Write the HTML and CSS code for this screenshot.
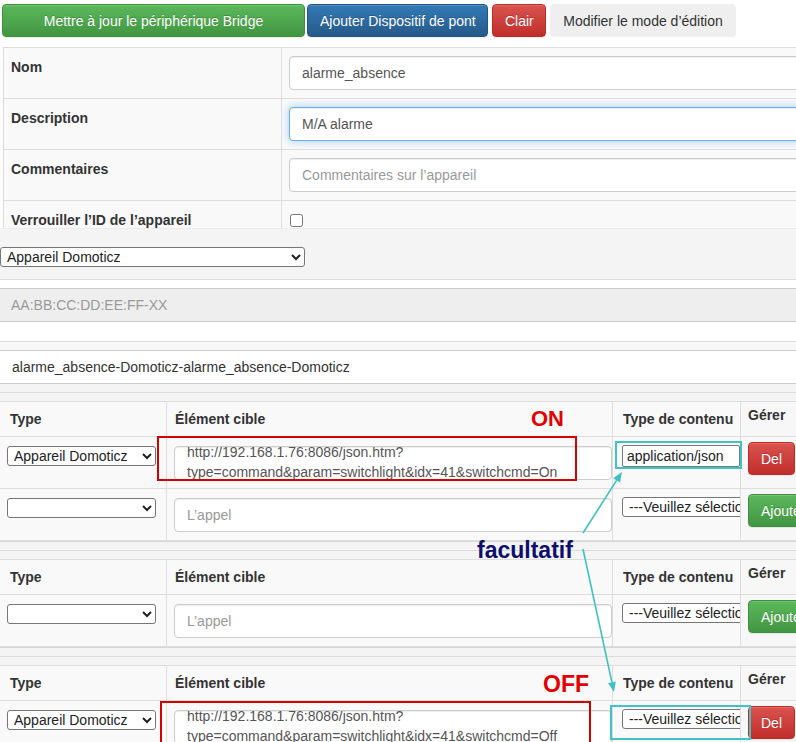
FILE: index.html
```html
<!DOCTYPE html>
<html lang="fr">
<head>
<meta charset="utf-8">
<title>Périphérique Bridge</title>
<link rel="stylesheet" href="styles.css">
</head>
<body>
  <div class="toolbar">
    <button class="btn btn-success btn-bridge">Mettre à jour le périphérique Bridge</button>
    <button class="btn btn-primary btn-add">Ajouter Dispositif de pont</button>
    <button class="btn btn-danger btn-clear">Clair</button>
    <button class="btn btn-default btn-edit">Modifier le mode d’édition</button>
  </div>

  <div class="form-wrap">
    <div class="form-label">Nom</div>
    <div class="form-field"><input class="form-control" value="alarme_absence"></div>
    <div class="form-label">Description</div>
    <div class="form-field"><input class="form-control is-focus" value="M/A alarme"></div>
    <div class="form-label">Commentaires</div>
    <div class="form-field"><input class="form-control" placeholder="Commentaires sur l’appareil"></div>
    <div class="form-label">Verrouiller l’ID de l’appareil</div>
    <div class="form-field field-top"><input type="checkbox" class="check"></div>
  </div>

  <div class="select-band">
    <select class="native-select wide-select"><option>Appareil Domoticz</option></select>
  </div>
  <div class="strip-white"></div>
  <div class="mac-field">AA:BB:CC:DD:EE:FF-XX</div>
  <div class="strip-white tall"></div>
  <div class="strip-gray"></div>
  <div class="name-field">alarme_absence-Domoticz-alarme_absence-Domoticz</div>

  <!-- Section 1 -->
  <div class="band"></div>
  <div class="band"></div>
  <div class="route">
    <div class="cell head c1">Type</div>
    <div class="cell head c2">Élément cible</div>
    <div class="cell head c3">Type de contenu</div>
    <div class="cell head c4">Gérer</div>

    <div class="cell c1"><select class="native-select type-select"><option>Appareil Domoticz</option></select></div>
    <div class="cell c2"><div class="textarea"><div class="textarea-inner">http://192.168.1.76:8086/json.htm?<br>type=command&amp;param=switchlight&amp;idx=41&amp;switchcmd=On</div></div></div>
    <div class="cell c3"><input class="plain-input" value="application/json"></div>
    <div class="cell c4"><button class="btn btn-danger btn-small">Del</button></div>

    <div class="cell c1"><select class="native-select type-select"><option></option></select></div>
    <div class="cell c2"><input class="form-control call-input" placeholder="L’appel"></div>
    <div class="cell c3"><select class="native-select ctype-select"><option>---Veuillez sélectionner---</option></select></div>
    <div class="cell c4"><button class="btn btn-success btn-small">Ajouter</button></div>
  </div>

  <!-- Section 2 -->
  <div class="band"></div>
  <div class="band"></div>
  <div class="route">
    <div class="cell head c1">Type</div>
    <div class="cell head c2">Élément cible</div>
    <div class="cell head c3">Type de contenu</div>
    <div class="cell head c4">Gérer</div>

    <div class="cell c1"><select class="native-select type-select"><option></option></select></div>
    <div class="cell c2"><input class="form-control call-input" placeholder="L’appel"></div>
    <div class="cell c3"><select class="native-select ctype-select"><option>---Veuillez sélectionner---</option></select></div>
    <div class="cell c4"><button class="btn btn-success btn-small">Ajouter</button></div>
  </div>

  <!-- Section 3 -->
  <div class="band"></div>
  <div class="band"></div>
  <div class="route">
    <div class="cell head c1">Type</div>
    <div class="cell head c2">Élément cible</div>
    <div class="cell head c3">Type de contenu</div>
    <div class="cell head c4">Gérer</div>

    <div class="cell c1"><select class="native-select type-select"><option>Appareil Domoticz</option></select></div>
    <div class="cell c2"><div class="textarea"><div class="textarea-inner">http://192.168.1.76:8086/json.htm?<br>type=command&amp;param=switchlight&amp;idx=41&amp;switchcmd=Off</div></div></div>
    <div class="cell c3"><select class="native-select ctype-select"><option>---Veuillez sélectionner---</option></select></div>
    <div class="cell c4"><button class="btn btn-danger btn-small">Del</button></div>
  </div>

  <!-- Annotations drawn over the screenshot -->
  <div class="annot">
    <svg class="arrows" width="796" height="742" viewBox="0 0 796 742">
      <line x1="583" y1="533" x2="616.6" y2="480.4" />
      <polygon points="622,472 620,482.6 613.2,478.2" />
      <line x1="583" y1="549" x2="611.9" y2="682.2" />
      <polygon points="614,692 615.8,681.4 608,683.1" />
    </svg>
    <div class="box-red box-on"></div>
    <div class="box-red box-off"></div>
    <div class="box-teal box-json"></div>
    <div class="box-teal box-sel"></div>
    <div class="tag tag-on">ON</div>
    <div class="tag tag-off">OFF</div>
    <div class="tag tag-opt">facultatif</div>
  </div>
</body>
</html>
```

FILE: styles.css
```css
* { box-sizing: border-box; }

html, body {
  margin: 0;
  padding: 0;
  width: 796px;
  height: 742px;
  overflow: hidden;
  background: #fff;
}

body {
  position: relative;
  font-family: "Liberation Sans", Arial, sans-serif;
  font-size: 14px;
  line-height: 20px;
  color: #333;
}

/* ---------- Toolbar ---------- */
.toolbar {
  display: flex;
  align-items: flex-start;
  height: 47px;
  padding: 4px 0 0 2px;
}

.btn {
  height: 33px;
  padding: 6px 12px;
  font: inherit;
  line-height: 20px;
  border: 1px solid transparent;
  border-radius: 4px;
  color: #fff;
  white-space: nowrap;
  text-align: center;
  flex: none;
}

.btn-success {
  background: linear-gradient(#5cb85c, #419641);
  border-color: #3e8f3e;
  text-shadow: 0 -1px 0 rgba(0, 0, 0, .2);
  box-shadow: inset 0 1px 0 rgba(255, 255, 255, .15), 0 1px 1px rgba(0, 0, 0, .075);
}

.btn-primary {
  background: linear-gradient(#337ab7, #265a88);
  border-color: #245580;
  text-shadow: 0 -1px 0 rgba(0, 0, 0, .2);
  box-shadow: inset 0 1px 0 rgba(255, 255, 255, .15), 0 1px 1px rgba(0, 0, 0, .075);
}

.btn-danger {
  background: linear-gradient(#d9534f, #c12e2a);
  border-color: #b92c28;
  text-shadow: 0 -1px 0 rgba(0, 0, 0, .2);
  box-shadow: inset 0 1px 0 rgba(255, 255, 255, .15), 0 1px 1px rgba(0, 0, 0, .075);
}

.btn-default {
  background: #efefef;
  border-color: #efefef;
  color: #333;
}

.btn-bridge { width: 303px; }
.btn-add { width: 181px; margin-left: 2px; }
.btn-clear { width: 54px; margin-left: 4px; }
.btn-edit { width: 186px; margin-left: 4px; }

/* ---------- Device form ---------- */
.form-wrap {
  margin-left: 3px;
  height: 181px;
  overflow: hidden;
  display: grid;
  grid-template-columns: 277px 1fr;
  grid-auto-rows: 51px;
  border-top: 1px solid #ddd;
  border-left: 1px solid #ddd;
  background: #f9f9f9;
}

.form-label {
  padding: 9px 8px 0 7px;
  font-weight: bold;
  border-bottom: 1px solid #ddd;
  white-space: nowrap;
}

.form-field {
  display: flex;
  align-items: center;
  padding-left: 7px;
  border-left: 1px solid #ddd;
  border-bottom: 1px solid #ddd;
  overflow: hidden;
}

.field-top { align-items: flex-start; }

.form-control {
  flex: none;
  width: 530px;
  height: 34px;
  padding: 6px 12px;
  font: inherit;
  color: #555;
  background: #fff;
  border: 1px solid #ccc;
  border-radius: 4px;
  box-shadow: inset 0 1px 1px rgba(0, 0, 0, .075);
  outline: none;
}

.form-control::placeholder { color: #999; }

.form-control.is-focus {
  border-color: #66afe9;
  box-shadow: inset 0 1px 1px rgba(0, 0, 0, .075), 0 0 8px rgba(102, 175, 233, .6);
}

.check {
  width: 13px;
  height: 13px;
  margin: 13px 0 0 1px;
}

/* ---------- Middle strips ---------- */
.select-band {
  height: 52px;
  padding-top: 18px;
  background: #f4f4f4;
  border-top: 1px solid #ebebeb;
  border-bottom: 1px solid #ddd;
}

.native-select {
  height: 20px;
  font-family: "Liberation Sans", Arial, sans-serif;
  font-size: 14px;
  color: #222;
  background: #fff;
  border: 1px solid #767676;
  border-radius: 3px;
  padding: 0 2px;
}

.wide-select { width: 305px; display: block; }

.strip-white {
  height: 8px;
  background: #fff;
}

.strip-white.tall {
  height: 20px;
  border-bottom: 1px solid #ddd;
}

.mac-field {
  height: 34px;
  padding-left: 11px;
  line-height: 32px;
  color: #999;
  background: #eee;
  border-top: 1px solid #ccc;
  border-bottom: 1px solid #ccc;
}

.strip-gray {
  height: 9px;
  background: #f7f7f7;
  border-bottom: 1px solid #ccc;
}

.name-field {
  height: 33px;
  padding-left: 12px;
  line-height: 32px;
  color: #333;
  background: #fff;
  border-bottom: 1px solid #ccc;
}

/* ---------- Route tables ---------- */
.band {
  height: 9px;
  background: #f4f4f4;
  border-bottom: 1px solid #ddd;
}

.route {
  display: grid;
  grid-template-columns: 166px 446px 128px 56px;
  grid-template-rows: 35px;
  grid-auto-rows: 52px;
  border-bottom: 1px solid #d6d6d6;
}

.cell {
  background: #f9f9f9;
  border-bottom: 1px solid #ddd;
  overflow: hidden;
  white-space: nowrap;
  padding-top: 9px;
}

.cell.head {
  display: flex;
  align-items: center;
  padding-top: 0;
  font-weight: bold;
  color: #333;
}

.c1 { padding-left: 7px; }
.c1.head { padding-left: 10px; }

.c2 { border-left: 1px solid #ddd; padding-left: 7px; overflow: visible; }
.c2.head { padding-left: 8px; }

.c3 { border-left: 1px solid #ddd; padding-left: 9px; padding-top: 8px; }
.c3.head { padding-left: 10px; }

.c4 { border-left: 1px solid #ddd; padding-left: 7px; padding-top: 5px; background: #f7f7f7; }
.c4.head { padding-bottom: 8px; }

.type-select { width: 149px; display: block; }
.ctype-select { width: 170px; display: block; }

.textarea {
  width: 438px;
  height: 34px;
  padding: 0 12px;
  color: #555;
  background: #fff;
  border: 1px solid #ccc;
  border-radius: 4px;
  box-shadow: inset 0 1px 1px rgba(0, 0, 0, .075);
  overflow: hidden;
}

.textarea-inner { margin-top: -5px; }

.call-input { width: 438px; }

.plain-input {
  display: block;
  width: 118px;
  height: 22px;
  padding: 0 4px;
  font: inherit;
  color: #222;
  background: #fff;
  border: 1px solid #767676;
  border-radius: 2px;
}

.btn-small { height: 33px; padding: 6px 12px; }

/* ---------- Annotations ---------- */
.annot {
  position: absolute;
  left: 0;
  top: 0;
  width: 796px;
  height: 742px;
  pointer-events: none;
}

.arrows {
  position: absolute;
  left: 0;
  top: 0;
}

.arrows line {
  stroke: #3fc1c1;
  stroke-width: 1.6;
}

.arrows polygon { fill: #3fc1c1; }

.box-red {
  position: absolute;
  border: 2px solid #d40000;
}

.box-on { left: 157px; top: 436px; width: 420px; height: 45px; }
.box-off { left: 160px; top: 701px; width: 431px; height: 60px; }

.box-teal {
  position: absolute;
  border: 2px solid #42c2c2;
}

.box-json { left: 615px; top: 441px; width: 127px; height: 28px; }
.box-sel { left: 610px; top: 705px; width: 141px; height: 35px; }

.tag {
  position: absolute;
  font-family: "Liberation Sans", Arial, sans-serif;
  font-weight: bold;
  line-height: 1;
  white-space: nowrap;
}

.tag-on { left: 531px; top: 408px; font-size: 22px; color: #e30000; }
.tag-off { left: 543px; top: 673px; font-size: 23px; color: #e30000; }
.tag-opt { left: 477px; top: 539px; font-size: 23px; color: #0d0d6b; }
```
